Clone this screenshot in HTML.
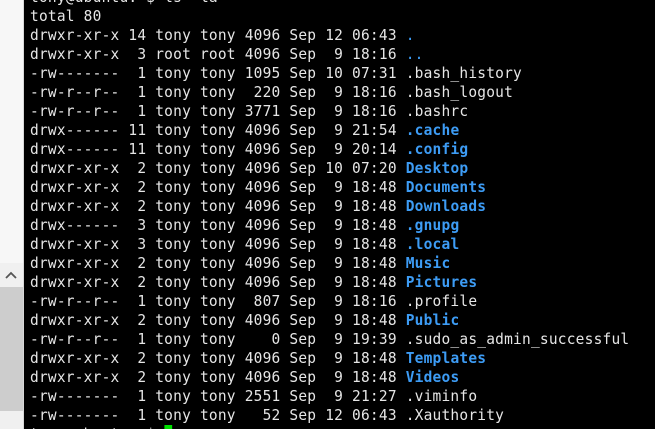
<!DOCTYPE html>
<html><head><meta charset="utf-8"><style>
html,body{margin:0;padding:0;width:655px;height:429px;overflow:hidden;background:#000}
#left{position:absolute;left:0;top:0;width:23px;height:429px;background:#f7f7f7;border-right:1px solid #d8d8d8}
#sb{position:absolute;left:0;top:263px;width:23px;height:166px;background:#f0f0f0}
#thumb{position:absolute;left:0;top:287px;width:23px;height:124px;background:#cdcdcd}
#arrow{position:absolute;left:4px;top:270px}
#term{position:absolute;left:24px;top:0;width:631px;height:429px;background:#000;overflow:hidden}
pre{position:absolute;left:6px;top:-12px;margin:0;font-family:"DejaVu Sans Mono","Liberation Mono",monospace;font-size:15px;letter-spacing:0.22px;line-height:19px;color:#e6e6e6;white-space:pre;transform:scaleX(0.967);transform-origin:0 0}
b{color:#3d9cf5;font-weight:bold}
i{color:#3d9cf5;font-style:normal}
.cur{display:inline-block;width:8px;height:19px;background:#00e000;vertical-align:top}
</style></head><body>
<div id="left"></div><div id="sb"></div><div id="thumb"></div>
<svg id="arrow" width="14" height="10" viewBox="0 0 14 10"><path d="M2 8 L7 3 L12 8" fill="none" stroke="#555" stroke-width="1.8"/></svg>
<div id="term"><pre>tony@ubuntu:~$ ls -la
total 80
drwxr-xr-x 14 tony tony 4096 Sep 12 06:43 <i>.</i>
drwxr-xr-x  3 root root 4096 Sep  9 18:16 <i>..</i>
-rw-------  1 tony tony 1095 Sep 10 07:31 .bash_history
-rw-r--r--  1 tony tony  220 Sep  9 18:16 .bash_logout
-rw-r--r--  1 tony tony 3771 Sep  9 18:16 .bashrc
drwx------ 11 tony tony 4096 Sep  9 21:54 <b>.cache</b>
drwx------ 11 tony tony 4096 Sep  9 20:14 <b>.config</b>
drwxr-xr-x  2 tony tony 4096 Sep 10 07:20 <b>Desktop</b>
drwxr-xr-x  2 tony tony 4096 Sep  9 18:48 <b>Documents</b>
drwxr-xr-x  2 tony tony 4096 Sep  9 18:48 <b>Downloads</b>
drwx------  3 tony tony 4096 Sep  9 18:48 <b>.gnupg</b>
drwxr-xr-x  3 tony tony 4096 Sep  9 18:48 <b>.local</b>
drwxr-xr-x  2 tony tony 4096 Sep  9 18:48 <b>Music</b>
drwxr-xr-x  2 tony tony 4096 Sep  9 18:48 <b>Pictures</b>
-rw-r--r--  1 tony tony  807 Sep  9 18:16 .profile
drwxr-xr-x  2 tony tony 4096 Sep  9 18:48 <b>Public</b>
-rw-r--r--  1 tony tony    0 Sep  9 19:39 .sudo_as_admin_successful
drwxr-xr-x  2 tony tony 4096 Sep  9 18:48 <b>Templates</b>
drwxr-xr-x  2 tony tony 4096 Sep  9 18:48 <b>Videos</b>
-rw-------  1 tony tony 2551 Sep  9 21:27 .viminfo
-rw-------  1 tony tony   52 Sep 12 06:43 .Xauthority
tony@ubuntu:~$ <span class="cur"></span></pre></div>
</body></html>
